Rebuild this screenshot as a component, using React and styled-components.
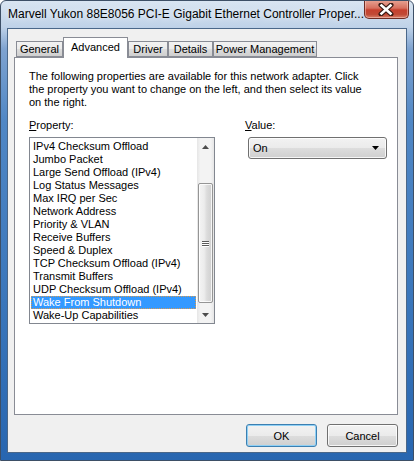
import React from 'react';
import styled, { createGlobalStyle } from 'styled-components';

const GlobalStyle = createGlobalStyle`
  html, body {
    margin: 0;
    padding: 0;
    background: #ffffff;
  }
  * {
    box-sizing: border-box;
  }
`;

const Window = styled.div`
  width: 414px;
  height: 461px;
  display: flex;
  flex-direction: column;
  border: 1px solid #3d4f66;
  border-radius: 6px 6px 0 0;
  background: linear-gradient(
    180deg,
    #d9e5f2 0px,
    #bfd2e8 26px,
    #7fa3d0 48px,
    #5087c5 120px,
    #3a76bb 300px,
    #2866b0 100%
  );
  font-family: 'Liberation Sans', Arial, sans-serif;
  font-size: 11px;
  color: #000;
  overflow: hidden;
`;

const TitleBar = styled.div`
  height: 27px;
  display: flex;
  align-items: flex-start;
  padding-left: 7px;
`;

const Title = styled.div`
  font-size: 12px;
  line-height: 27px;
  white-space: nowrap;
  color: #000;
  text-shadow: 0 0 6px rgba(255, 255, 255, 0.9);
`;

const CloseButton = styled.div`
  margin-left: auto;
  margin-right: 4px;
  margin-top: -1px;
  width: 49px;
  height: 19px;
  border: 1px solid #6e2c24;
  border-top: none;
  border-radius: 0 0 5px 5px;
  background: linear-gradient(180deg, #e8a595 0%, #d7705f 45%, #c6402e 55%, #c14a36 80%, #d8806a 100%);
  box-shadow: inset 0 0 0 1px rgba(255, 220, 210, 0.45);
  display: flex;
  align-items: center;
  justify-content: center;
`;

const Client = styled.div`
  flex: 1;
  margin: 0 6px 7px 6px;
  border: 1px solid #4a6789;
  background: #f0f0f0;
  display: flex;
  flex-direction: column;
  padding: 8px 8px 5px 6px;
`;

const TabRow = styled.div`
  height: 20px;
  display: flex;
  align-items: flex-end;
  padding-left: 2px;
  position: relative;
  z-index: 1;
`;

const Tab = styled.div`
  width: ${(p) => p.$w}px;
  height: ${(p) => (p.$active ? 21 : 16)}px;
  margin-bottom: ${(p) => (p.$active ? -1 : 0)}px;
  border: 1px solid #898c95;
  border-bottom: ${(p) => (p.$active ? 'none' : '1px solid #898c95')};
  background: ${(p) =>
    p.$active ? '#ffffff' : 'linear-gradient(180deg, #f2f2f2 0%, #ebebeb 50%, #dddddd 51%, #cfcfcf 100%)'};
  display: flex;
  align-items: ${(p) => (p.$active ? 'flex-start' : 'center')};
  padding-top: ${(p) => (p.$active ? '3px' : '1px')};
  justify-content: center;
  white-space: nowrap;
  line-height: 13px;
`;

const Panel = styled.div`
  height: 358px;
  border: 1px solid #898c95;
  background: #ffffff;
  padding: 12px 14px 0 14px;
`;

const Description = styled.p`
  margin: 0;
  line-height: 13px;
  width: 340px;
`;

const Fields = styled.div`
  margin-top: 10px;
  display: grid;
  grid-template-columns: 186px 1fr;
  column-gap: 30px;
`;

const Field = styled.div`
  display: flex;
  flex-direction: column;
`;

const Label = styled.div`
  line-height: 13px;
  margin-bottom: 5px;
`;

const ListBox = styled.div`
  width: 186px;
  height: 187px;
  border: 1px solid #828790;
  background: #fff;
  display: flex;
`;

const Rows = styled.div`
  flex: 1;
  padding: 2px 1px 0 1px;
`;

const Row = styled.div`
  height: 13px;
  line-height: 13px;
  padding-left: 2px;
  white-space: nowrap;
  background: ${(p) => (p.$selected ? '#3399ff' : 'transparent')};
  color: ${(p) => (p.$selected ? '#ffffff' : '#000000')};
  outline: ${(p) => (p.$selected ? '1px dotted #d69a52' : 'none')};
  outline-offset: -1px;
`;

const ScrollBar = styled.div`
  width: 17px;
  display: flex;
  flex-direction: column;
  background: linear-gradient(90deg, #e6e6e6 0%, #f3f3f3 20%, #f3f3f3 80%, #e6e6e6 100%);
`;

const ScrollButton = styled.div`
  height: 17px;
  display: flex;
  align-items: center;
  justify-content: center;
`;

const Track = styled.div`
  flex: 1;
  display: flex;
  flex-direction: column;
  padding: 28px 1px 1px 1px;
`;

const Thumb = styled.div`
  height: 120px;
  border: 1px solid #959595;
  border-radius: 2px;
  background: linear-gradient(90deg, #f4f4f4 0%, #ececec 40%, #dcdcdc 60%, #cfcfcf 100%);
  box-shadow: inset 0 0 0 1px rgba(255, 255, 255, 0.8);
  display: flex;
  flex-direction: column;
  align-items: center;
  justify-content: center;
  gap: 1px;
`;

const Grip = styled.div`
  width: 7px;
  height: 1px;
  background: #5a5a5a;
  box-shadow: 0 1px 0 #ffffff;
`;

const Combo = styled.div`
  margin-left: 3px;
  width: 139px;
  height: 22px;
  border: 1px solid #707070;
  border-radius: 3px;
  background: linear-gradient(180deg, #f2f2f2 0%, #ebebeb 50%, #dddddd 51%, #cfcfcf 100%);
  box-shadow: inset 0 0 0 1px rgba(255, 255, 255, 0.8);
  display: flex;
  align-items: center;
  padding: 0 7px 0 4px;
`;

const ComboText = styled.span`
  flex: 1;
`;

const ButtonRow = styled.div`
  margin-top: 9px;
  display: flex;
  justify-content: flex-end;
  gap: 10px;
`;

const Button = styled.div`
  width: 71px;
  height: 23px;
  border: 1px solid ${(p) => (p.$default ? '#3c7fb1' : '#707070')};
  border-radius: 3px;
  background: linear-gradient(180deg, #f2f2f2 0%, #ebebeb 50%, #dddddd 51%, #cfcfcf 100%);
  box-shadow: inset 0 0 0 1px ${(p) => (p.$default ? '#8fd0f5' : 'rgba(255, 255, 255, 0.8)')};
  display: flex;
  align-items: center;
  justify-content: center;
`;

const tabs = [
  { label: 'General', w: 47 },
  { label: 'Advanced', w: 65, active: true },
  { label: 'Driver', w: 40 },
  { label: 'Details', w: 45 },
  { label: 'Power Management', w: 104 },
];

const properties = [
  'IPv4 Checksum Offload',
  'Jumbo Packet',
  'Large Send Offload (IPv4)',
  'Log Status Messages',
  'Max IRQ per Sec',
  'Network Address',
  'Priority & VLAN',
  'Receive Buffers',
  'Speed & Duplex',
  'TCP Checksum Offload (IPv4)',
  'Transmit Buffers',
  'UDP Checksum Offload (IPv4)',
  'Wake From Shutdown',
  'Wake-Up Capabilities',
];

const Arrow = ({ down, color = '#4d4d4d' }) => (
  <svg width="7" height="4" viewBox="0 0 7 4">
    <path d={down ? 'M0 0H7L3.5 4Z' : 'M0 4H7L3.5 0Z'} fill={color} />
  </svg>
);

const CloseGlyph = () => (
  <svg width="16" height="13" viewBox="0 0 16 13">
    <path d="M3 2L13 11M13 2L3 11" stroke="#3a1a14" strokeWidth="5" strokeLinecap="round" />
    <path d="M3.5 2.5L12.5 10.5M12.5 2.5L3.5 10.5" stroke="#ffffff" strokeWidth="2.6" strokeLinecap="square" />
  </svg>
);

const App = () => {
  return (
    <>
      <GlobalStyle />
      <Window>
        <TitleBar>
          <Title>Marvell Yukon 88E8056 PCI-E Gigabit Ethernet Controller Proper...</Title>
          <CloseButton>
            <CloseGlyph />
          </CloseButton>
        </TitleBar>
        <Client>
          <TabRow>
            {tabs.map((t) => (
              <Tab key={t.label} $w={t.w} $active={t.active}>
                {t.label}
              </Tab>
            ))}
          </TabRow>
          <Panel>
            <Description>
              The following properties are available for this network adapter. Click
              the property you want to change on the left, and then select its value
              on the right.
            </Description>
            <Fields>
              <Field>
                <Label>
                  <u>P</u>roperty:
                </Label>
                <ListBox>
                  <Rows>
                    {properties.map((p) => (
                      <Row key={p} $selected={p === 'Wake From Shutdown'}>
                        {p}
                      </Row>
                    ))}
                  </Rows>
                  <ScrollBar>
                    <ScrollButton>
                      <Arrow />
                    </ScrollButton>
                    <Track>
                      <Thumb>
                        <Grip />
                        <Grip />
                        <Grip />
                      </Thumb>
                    </Track>
                    <ScrollButton>
                      <Arrow down />
                    </ScrollButton>
                  </ScrollBar>
                </ListBox>
              </Field>
              <Field>
                <Label>
                  <u>V</u>alue:
                </Label>
                <Combo>
                  <ComboText>On</ComboText>
                  <Arrow down color="#000" />
                </Combo>
              </Field>
            </Fields>
          </Panel>
          <ButtonRow>
            <Button $default>OK</Button>
            <Button>Cancel</Button>
          </ButtonRow>
        </Client>
      </Window>
    </>
  );
};

export default App;
